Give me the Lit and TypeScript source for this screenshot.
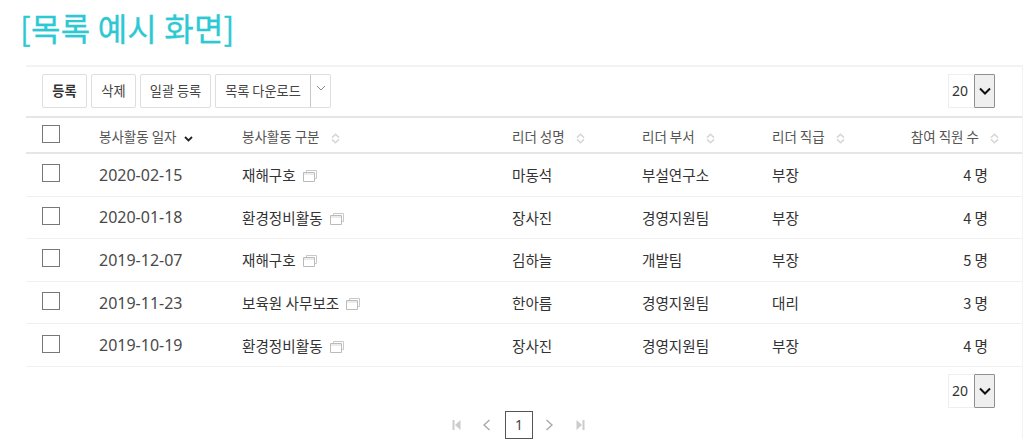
import { LitElement, html, css, svg } from "lit";
import { customElement } from "lit/decorators.js";

const rows = [
  { date: "2020-02-15", type: "재해구호", name: "마동석", dept: "부설연구소", rank: "부장", count: 4 },
  { date: "2020-01-18", type: "환경정비활동", name: "장사진", dept: "경영지원팀", rank: "부장", count: 4 },
  { date: "2019-12-07", type: "재해구호", name: "김하늘", dept: "개발팀", rank: "부장", count: 5 },
  { date: "2019-11-23", type: "보육원 사무보조", name: "한아름", dept: "경영지원팀", rank: "대리", count: 3 },
  { date: "2019-10-19", type: "환경정비활동", name: "장사진", dept: "경영지원팀", rank: "부장", count: 4 },
];

const sortIcon = html`<svg class="sort" width="9" height="11" viewBox="0 0 9 11">
  <path d="M1 4.6 4.5 1.2 8 4.6M1 6.4 4.5 9.8 8 6.4" fill="none" stroke="#d6d6d6" stroke-width="1.5" />
</svg>`;

const windowIcon = html`<svg class="win" width="14" height="12" viewBox="0 0 14 12">
  <path d="M3.5 2.5V.5h10v8h-2" fill="none" stroke="#c8c8c8" />
  <path d="M.5 2.5h11v9H.5z" fill="#fff" stroke="#bbb" />
  <path d="M1 4h10" stroke="#d8d8d8" />
</svg>`;

const selectArrow = svg`<path d="M1 1.5 6 6.5 11 1.5" fill="none" stroke="#111" stroke-width="2" />`;

@customElement("app-root")
export class AppRoot extends LitElement {
  static styles = css`
    :host {
      display: block;
      height: 448px;
      overflow: hidden;
      background: #fff;
      font-family: "Noto Sans CJK KR", "Noto Sans", sans-serif;
      color: #333;
    }
    h1 {
      margin: 0;
      padding: 4px 0 0 20px;
      height: 65px;
      box-sizing: border-box;
      font-size: 32px;
      line-height: 46px;
      font-weight: 400;
      color: #2cc9d3;
      letter-spacing: 0.2px;
      -webkit-text-stroke: 0.3px #2cc9d3;
    }
    .panel {
      margin-left: 26px;
      width: 996px;
      border-top: 2px solid #f3f3f3;
      border-right: 1px solid #f3f3f3;
    }
    .toolbar {
      display: flex;
      align-items: center;
      justify-content: space-between;
      height: 49px;
      padding: 0 27px 2px 16px;
      box-sizing: border-box;
    }
    .buttons {
      display: flex;
      gap: 4px;
    }
    button {
      height: 34px;
      padding: 0;
      border: 1px solid #dedede;
      border-radius: 2px;
      background: #fff;
      font: 400 13.2px "Noto Sans CJK KR", sans-serif;
      color: #444;
    }
    .b-add {
      width: 45px;
      font-weight: 700;
      color: #333;
    }
    .b-del {
      width: 45px;
    }
    .b-bulk {
      width: 71px;
    }
    .split {
      display: flex;
    }
    .b-down {
      width: 96px;
      border-right-color: #c8c8c8;
      border-radius: 2px 0 0 2px;
    }
    .b-more {
      width: 20px;
      border-left: 0;
      border-radius: 0 2px 2px 0;
      display: flex;
      justify-content: center;
      padding-top: 10px;
      box-sizing: border-box;
    }
    .select {
      display: flex;
      height: 34px;
      width: 47px;
      font: 400 14px "Noto Sans", sans-serif;
      color: #333;
    }
    .select span {
      flex: 1;
      border: 1px solid #eee;
      border-right: 0;
      line-height: 32px;
      padding-left: 3px;
    }
    .select i {
      width: 21px;
      box-sizing: border-box;
      border: 1px solid #8f8f8f;
      border-radius: 1px;
      background: #efefef;
      display: flex;
      align-items: center;
      justify-content: center;
    }
    table {
      width: 100%;
      table-layout: fixed;
      border-collapse: collapse;
      font-size: 14.6px;
    }
    th {
      height: 36px;
      padding: 2px 0 0;
      box-sizing: border-box;
      border-top: 2px solid #e6e6e6;
      border-bottom: 2px solid #e6e6e6;
      text-align: left;
      font-size: 13.5px;
      font-weight: 400;
      color: #555;
    }
    td {
      height: 41.6px;
      padding: 0;
      border-bottom: 1px solid #f0f0f0;
      color: #333;
    }
    th.check {
      padding: 0 0 2px 16px;
    }
    td.check {
      height: 38.6px;
      padding: 0 0 3px 16px;
    }
    .box {
      display: block;
      width: 18px;
      height: 18px;
      box-sizing: border-box;
      border: 1px solid #777;
      background: #fff;
    }
    .date {
      font-family: "Noto Sans", sans-serif;
      font-size: 16px;
      color: #4a4a4a;
    }
    .num {
      text-align: right;
      padding-right: 34px;
    }
    th.num {
      padding-right: 23px;
    }
    .sort {
      margin-left: 8px;
      vertical-align: -2px;
    }
    .win {
      margin-left: 7px;
      vertical-align: -1px;
    }
    .sorted {
      margin-left: 4px;
      vertical-align: 0;
    }
    .foot {
      display: flex;
      justify-content: flex-end;
      padding: 7px 27px 0 0;
    }
    .pager {
      display: flex;
      align-items: center;
      justify-content: center;
      margin: 3px 0 0 -26px;
      padding-left: 15px;
      box-sizing: border-box;
      width: 1024px;
      height: 28px;
    }
    .pager svg {
      display: block;
    }
    .pg {
      display: flex;
      justify-content: center;
    }
    .first {
      width: 24px;
    }
    .prev {
      width: 37px;
    }
    .next {
      width: 33px;
    }
    .last {
      width: 29px;
    }
    .current {
      width: 28px;
      height: 28px;
      box-sizing: border-box;
      border: 1px solid #555;
      text-align: center;
      font: 400 14px/26px "Noto Sans", sans-serif;
      color: #444;
    }
  `;

  private select() {
    return html`<div class="select">
      <span>20</span>
      <i><svg width="12" height="8" viewBox="0 0 12 8">${selectArrow}</svg></i>
    </div>`;
  }

  render() {
    return html`
      <h1>[목록 예시 화면]</h1>
      <div class="panel">
        <div class="toolbar">
          <div class="buttons">
            <button class="b-add">등록</button>
            <button class="b-del">삭제</button>
            <button class="b-bulk">일괄 등록</button>
            <div class="split">
              <button class="b-down">목록 다운로드</button>
              <button class="b-more">
                <svg width="10" height="6" viewBox="0 0 10 6">
                  <path d="M1 1 5 5 9 1" fill="none" stroke="#888" />
                </svg>
              </button>
            </div>
          </div>
          ${this.select()}
        </div>
        <table>
          <colgroup>
            <col style="width:73px" />
            <col style="width:143px" />
            <col style="width:270px" />
            <col style="width:130px" />
            <col style="width:130px" />
            <col />
          </colgroup>
          <thead>
            <tr>
              <th class="check"><span class="box"></span></th>
              <th>
                봉사활동 일자
                <svg class="sorted" width="9" height="6" viewBox="0 0 9 6">
                  <path d="M1 1 4.5 4.5 8 1" fill="none" stroke="#222" stroke-width="1.8" />
                </svg>
              </th>
              <th>봉사활동 구분 ${sortIcon}</th>
              <th>리더 성명 ${sortIcon}</th>
              <th>리더 부서 ${sortIcon}</th>
              <th>리더 직급 ${sortIcon}</th>
              <th class="num">참여 직원 수 ${sortIcon}</th>
            </tr>
          </thead>
          <tbody>
            ${rows.map(
              (r) => html`<tr>
                <td class="check"><span class="box"></span></td>
                <td class="date">${r.date}</td>
                <td>${r.type}${windowIcon}</td>
                <td>${r.name}</td>
                <td>${r.dept}</td>
                <td>${r.rank}</td>
                <td class="num">${r.count} 명</td>
              </tr>`
            )}
          </tbody>
        </table>
        <div class="foot">${this.select()}</div>
        <div class="pager">
          <div class="pg first">
            <svg width="9" height="10" viewBox="0 0 9 10"><path d="M.5 0h2v10h-2zM8.5 0v10L3 5z" fill="#ccc" /></svg>
          </div>
          <div class="pg prev">
            <svg width="9" height="12" viewBox="0 0 9 12"><path d="M7.5 1 2 6l5.5 5" fill="none" stroke="#aaa" stroke-width="1.4" /></svg>
          </div>
          <div class="current">1</div>
          <div class="pg next">
            <svg width="9" height="12" viewBox="0 0 9 12"><path d="M1.5 1 7 6l-5.5 5" fill="none" stroke="#aaa" stroke-width="1.4" /></svg>
          </div>
          <div class="pg last">
            <svg width="9" height="10" viewBox="0 0 9 10"><path d="M.5 0v10L6 5zM6.5 0h2v10h-2z" fill="#ccc" /></svg>
          </div>
        </div>
      </div>
    `;
  }
}
